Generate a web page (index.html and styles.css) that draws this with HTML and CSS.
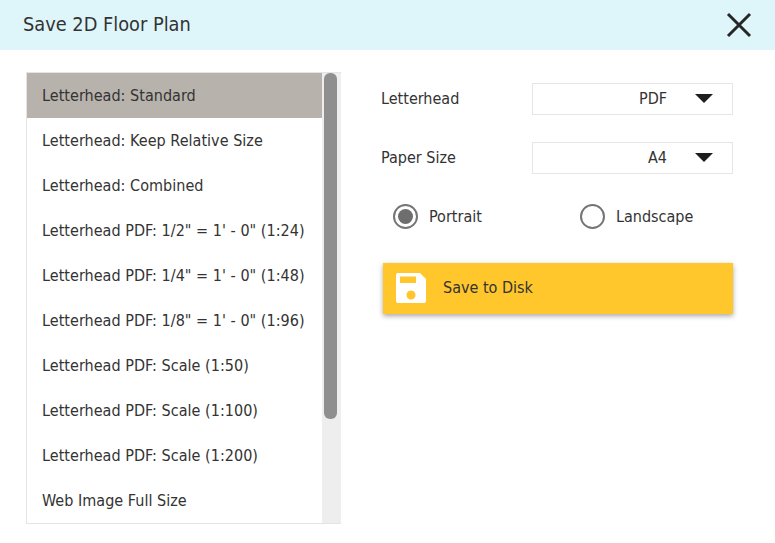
FILE: index.html
```html
<!DOCTYPE html>
<html lang="en">
<head>
<meta charset="utf-8">
<title>Save 2D Floor Plan</title>
<link rel="stylesheet" href="styles.css">
</head>
<body>
<header class="header">
  <h1 class="title">Save 2D Floor Plan</h1>
  <svg class="close" width="26" height="26" viewBox="0 0 26 26"><path d="M2 2 L24 24 M24 2 L2 24" fill="none" stroke="#262626" stroke-width="3"/></svg>
</header>
<main class="content">
  <div class="list">
    <ul class="items">
      <li class="item selected">Letterhead: Standard</li>
      <li class="item">Letterhead: Keep Relative Size</li>
      <li class="item">Letterhead: Combined</li>
      <li class="item">Letterhead PDF: 1/2" = 1' - 0" (1:24)</li>
      <li class="item">Letterhead PDF: 1/4" = 1' - 0" (1:48)</li>
      <li class="item">Letterhead PDF: 1/8" = 1' - 0" (1:96)</li>
      <li class="item">Letterhead PDF: Scale (1:50)</li>
      <li class="item">Letterhead PDF: Scale (1:100)</li>
      <li class="item">Letterhead PDF: Scale (1:200)</li>
      <li class="item">Web Image Full Size</li>
    </ul>
    <div class="track"><div class="thumb"></div></div>
  </div>
  <section class="options">
    <div class="field">
      <span class="label">Letterhead</span>
      <div class="select"><span>PDF</span><i class="caret"></i></div>
    </div>
    <div class="field">
      <span class="label">Paper Size</span>
      <div class="select"><span>A4</span><i class="caret"></i></div>
    </div>
    <div class="radios">
      <div class="radio-wrap"><span class="radio on"></span><span>Portrait</span></div>
      <div class="radio-wrap"><span class="radio"></span><span>Landscape</span></div>
    </div>
    <button class="save" type="button">
      <svg width="30" height="30" viewBox="0 0 30 30"><path fill-rule="evenodd" fill="#fff" d="M2 0H24L30 6V28a2 2 0 0 1-2 2H2a2 2 0 0 1-2-2V2a2 2 0 0 1 2-2ZM4 3.500V10H20V3.500ZM15 17.500a4.500 4.500 0 1 0 .01 0Z"/></svg>
      <span>Save to Disk</span>
    </button>
  </section>
</main>
</body>
</html>
```
FILE: styles.css
```css
* { box-sizing: border-box; }
html, body { margin: 0; height: 100%; }
body {
  background: #fff;
  color: #333;
  font-family: "DejaVu Sans", sans-serif;
  font-stretch: condensed;
  font-size: 16px;
  overflow: hidden;
}
.header {
  height: 50px;
  background: #def6fa;
  display: flex;
  align-items: center;
  justify-content: space-between;
  padding: 0 23px;
}
.title { margin: 0 0 2px; font-size: 19.8px; font-weight: 400; color: #333; }
.content { display: flex; padding: 22px 42px 0 26px; gap: 40px; }
.list {
  width: 315px;
  height: 452px;
  display: flex;
  border: 1px solid #e4e4e4;
  border-width: 1px 0 1px 1px;
  overflow: hidden;
  flex: none;
}
.items { list-style: none; margin: 0; padding: 0; width: 295px; flex: none; }
.item { height: 45px; line-height: 45px; padding-left: 15px; white-space: nowrap; letter-spacing: .03px; }
.selected { background: #b7b2ab; }
.track { flex: 1; background: #eeeeee; padding: 0 4px 0 2px; }
.thumb { height: 346px; background: #8f8f8f; border-radius: 6px; }
.options { flex: 1; min-width: 0; padding-top: 11px; }
.field { display: flex; align-items: center; justify-content: space-between; height: 32px; margin-bottom: 27px; }
.label { padding-bottom: 2px; }
.select {
  width: 201px;
  height: 32px;
  border: 1px solid #e6e6e6;
  display: flex;
  align-items: center;
  justify-content: flex-end;
  padding: 0 19px 2px 0;
  gap: 28px;
}
.caret { width: 0; height: 0; border-left: 9px solid transparent; border-right: 9px solid transparent; border-top: 9px solid #1e1e1e; }
.radios { display: flex; padding-left: 12px; height: 26px; align-items: center; margin-top: 29px; }
.radio-wrap { display: flex; align-items: center; gap: 11px; width: 187px; flex: none; }
.radio-wrap:last-child { width: auto; }
.radio { width: 25px; height: 25px; border: 2px solid #757575; border-radius: 50%; display: flex; align-items: center; justify-content: center; }
.on::after { content: ""; width: 15px; height: 15px; background: #6e6e6e; border-radius: 50%; }
.save {
  display: flex;
  align-items: center;
  gap: 17px;
  width: 350px;
  height: 51px;
  margin-top: 34px;
  margin-left: 2px;
  padding: 0 0 2px 13px;
  border: 0;
  background: #ffc72c;
  color: #333;
  font: inherit;
  box-shadow: 0 2px 5px rgba(0,0,0,.35);
}
```
